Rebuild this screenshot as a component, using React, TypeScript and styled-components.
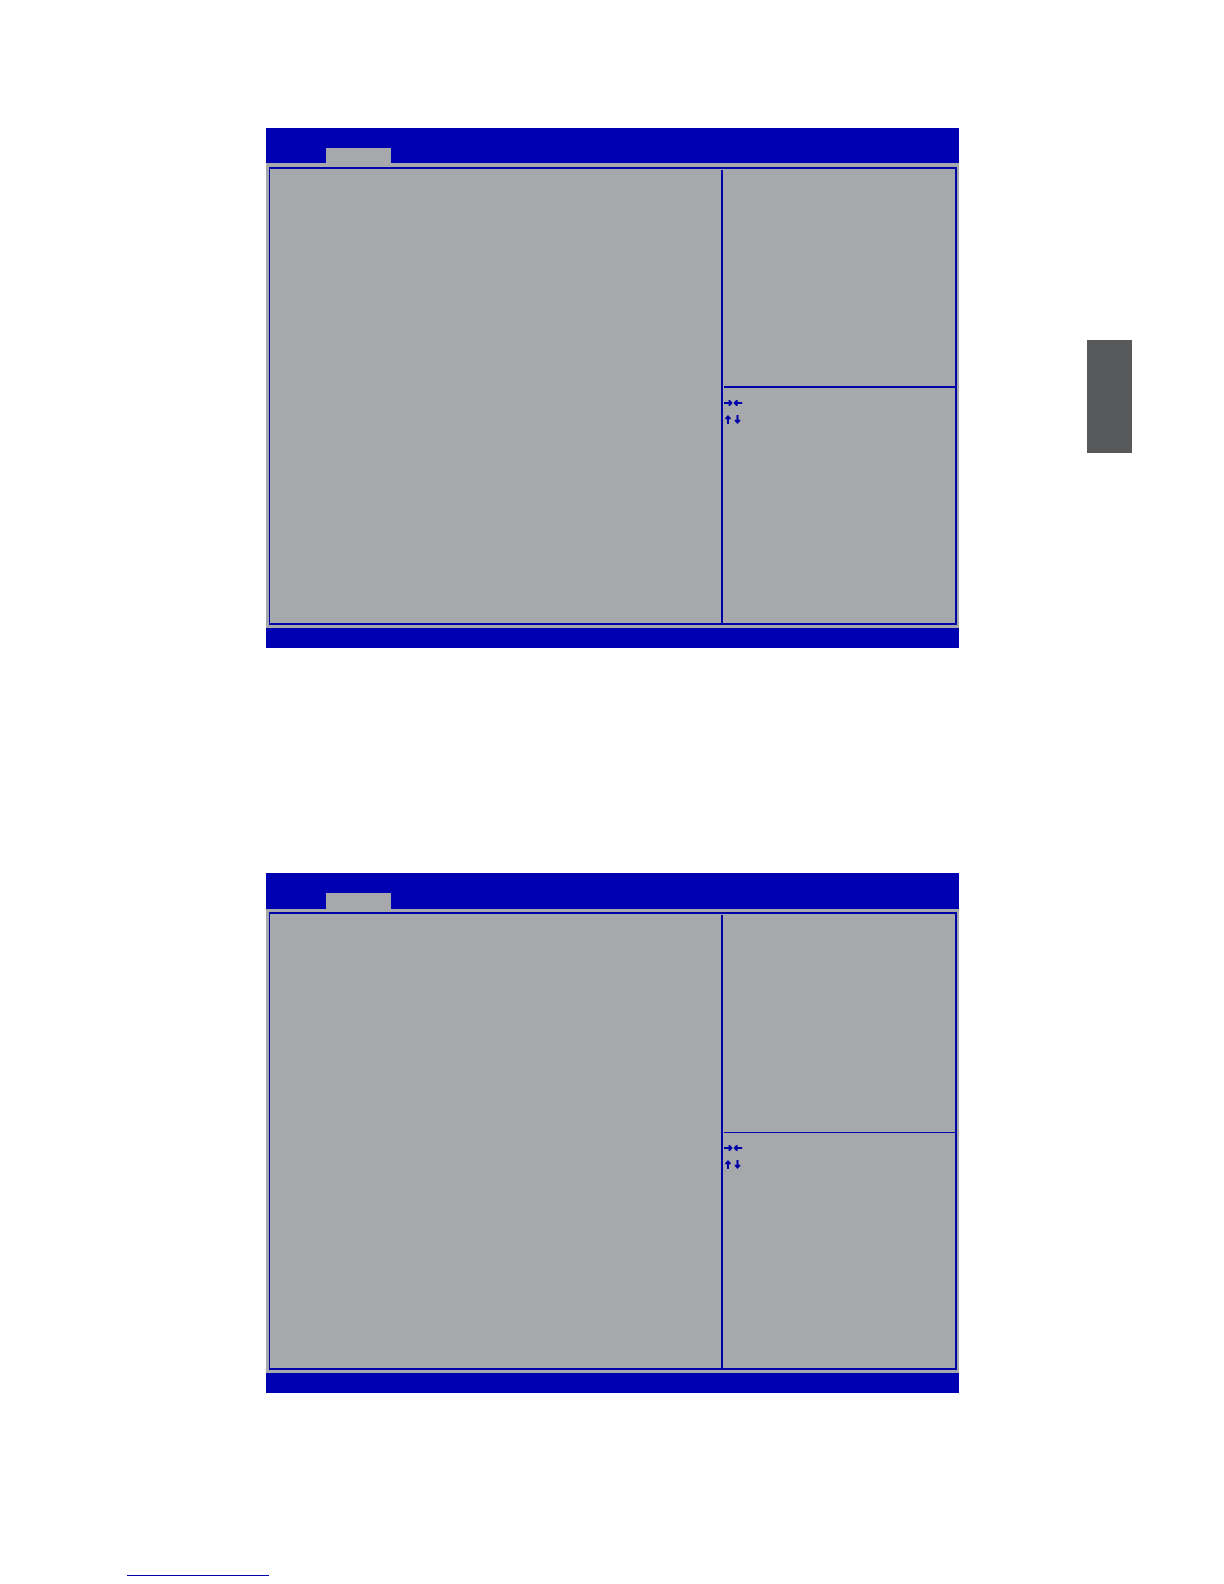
import React from "react";
import styled, { createGlobalStyle } from "styled-components";

const blue = "#0000b3";
const line = "#0000a8";
const grey = "#a6a8ab";

const GlobalStyle = createGlobalStyle`
  *, *::before, *::after { box-sizing: border-box; }
  body {
    margin: 0;
    background: #ffffff;
    font-family: "Liberation Sans", Arial, sans-serif;
  }
`;

const Page = styled.div`
  padding: 128px 0 8px;
`;

const Columns = styled.div`
  display: grid;
  grid-template-columns: minmax(0, 266fr) minmax(0, 693fr) minmax(0, 128fr) 45px 92px;
  align-items: start;
`;

const Screens = styled.main`
  grid-column: 2;
  display: flex;
  flex-direction: column;
  gap: 225px;
`;

const ChapterMark = styled.aside`
  grid-column: 4;
  height: 113px;
  margin-top: 212px;
  background: #58595b;
`;

const Screen = styled.section`
  display: flex;
  flex-direction: column;
  background: ${grey};
`;

const MenuBar = styled.header<{ $height: number }>`
  display: flex;
  height: ${(p) => p.$height}px;
  padding: 20px 0 0 60px;
  background: ${blue};
`;

const ActiveTab = styled.div`
  width: 65px;
  background: ${grey};
`;

const Frame = styled.div<{ $top: number }>`
  display: grid;
  grid-template-columns: minmax(0, 451fr) 2px minmax(0, 232fr);
  min-height: 458px;
  margin: ${(p) => p.$top}px 2px 3px 3px;
  border: 2px solid ${line};
  border-left-width: 1px;
`;

const Options = styled.div`
  min-width: 0;
`;

const Divider = styled.div`
  margin-top: 1px;
  background: ${line};
`;

const Side = styled.div`
  display: flex;
  flex-direction: column;
  padding-left: 1px;
`;

const Help = styled.div<{ $rule: number }>`
  height: 219px;
  border-bottom: ${(p) => p.$rule}px solid ${line};
`;

const Keys = styled.div`
  display: flex;
  flex-direction: column;
  gap: 7px;
  padding-top: 11px;
`;

const KeyIcon = styled.svg`
  display: block;
  width: 19px;
  height: 9px;
  fill: ${line};
`;

const StatusBar = styled.footer`
  height: 20px;
  background: ${blue};
`;

const FootLink = styled.a`
  display: block;
  width: 142px;
  height: 20px;
  margin: 163px 0 0 127px;
  border-bottom: 1px solid ${line};
`;

type SetupProps = { bar: number; rule: number };

function SetupScreen({ bar, rule }: SetupProps) {
  return (
    <Screen>
      <MenuBar $height={bar}>
        <ActiveTab />
      </MenuBar>
      <Frame $top={39 - bar}>
        <Options />
        <Divider />
        <Side>
          <Help $rule={rule} />
          <Keys>
            <KeyIcon viewBox="0 0 19 9" aria-hidden="true">
              <path d="M0 3h4.6V1h1.4L8.7 4 6 7H4.6V5H0z" />
              <path d="M18.2 3h-4.6V1h-1.4L9.5 4l2.7 3h1.4V5h4.6z" />
            </KeyIcon>
            <KeyIcon viewBox="0 0 19 9" aria-hidden="true">
              <path d="M3 9V4.2H1.2V3L4 0l2.8 3v1.2H5V9z" />
              <path d="M12.5 0v4.8h-1.8V6l2.8 3 2.8-3V4.8h-1.8V0z" />
            </KeyIcon>
          </Keys>
        </Side>
      </Frame>
      <StatusBar />
    </Screen>
  );
}

export default function App() {
  return (
    <>
      <GlobalStyle />
      <Page>
        <Columns>
          <Screens>
            <SetupScreen bar={35} rule={2} />
            <SetupScreen bar={36} rule={1} />
          </Screens>
          <ChapterMark />
        </Columns>
        <FootLink href="#top" />
      </Page>
    </>
  );
}
